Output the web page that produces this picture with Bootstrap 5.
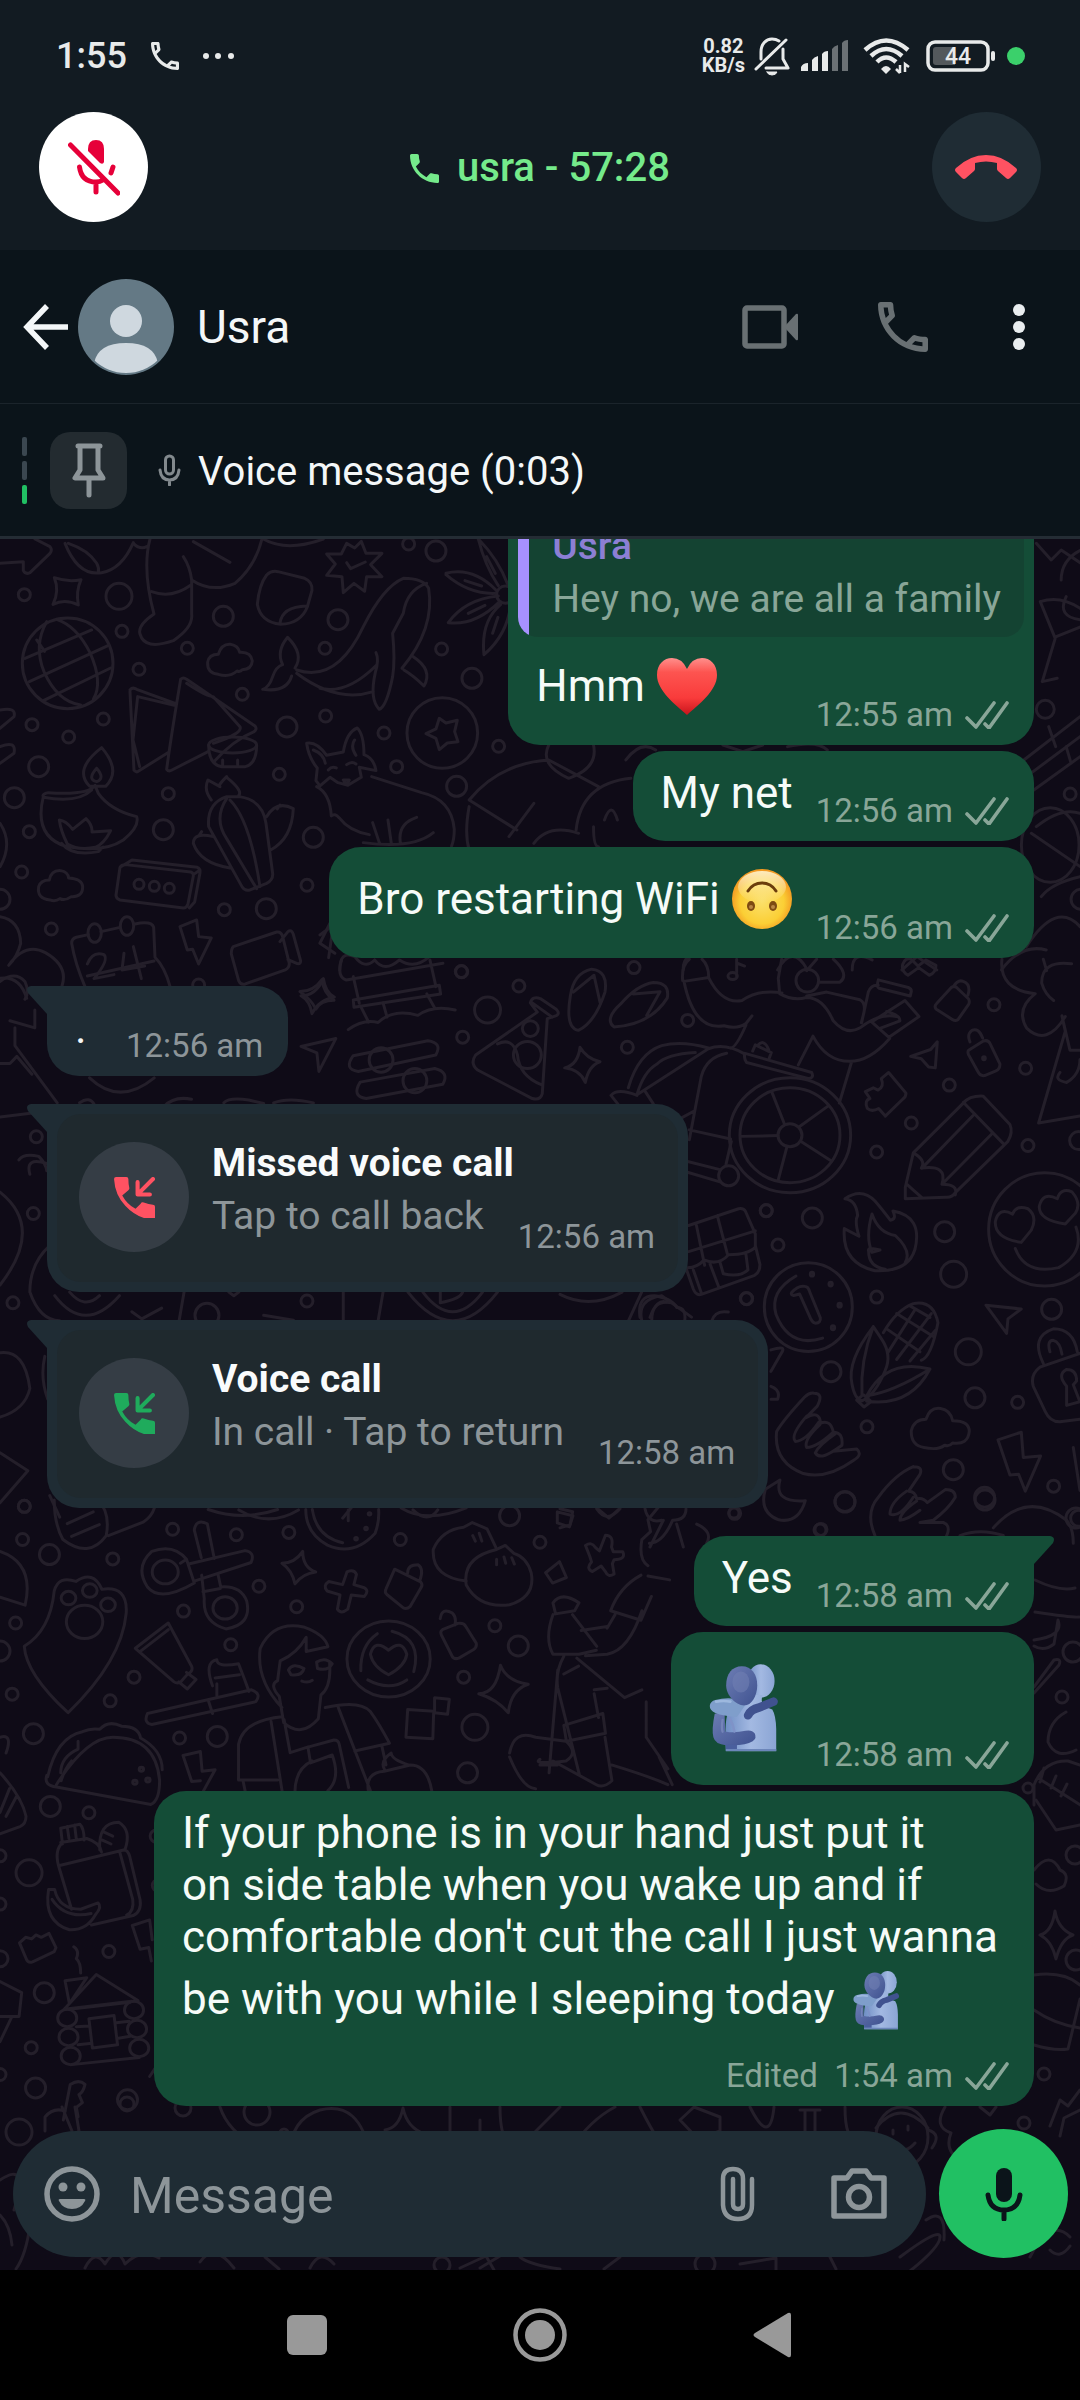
<!DOCTYPE html>
<html lang="en">
<head>
<meta charset="utf-8">
<meta name="viewport" content="width=device-width, initial-scale=1">
<title>Usra</title>
<link href="https://cdn.jsdelivr.net/npm/bootstrap@5.3.0/dist/css/bootstrap.min.css" rel="stylesheet">
<style>
  body { font-family: Roboto, "Noto Sans", sans-serif; background: #000; color: #f4f7f8; }
  svg { display: block; flex: none; }
  .btn-plain { padding: 0; border: 0; background: none; color: inherit; line-height: 0; border-radius: 50%; flex: none; }

  .top-zone { background: #121b22; padding-bottom: 28px; }
  .status-row { height: 112px; padding: 0 55px 0 56px; color: #e8eaea; }
  .clock { font-size: 36px; font-weight: 500; line-height: 44px; }
  .speed { font-size: 20px; font-weight: 700; line-height: 19px; }
  .call-row { padding: 0 39px; }
  .call-btn { width: 109px; height: 110px; display: flex; align-items: center; justify-content: center; }
  .call-btn-mute { background: #fff; color: #e60039; }
  .call-btn-end { background: #1f2c34; color: #ff5262; }
  .call-title { color: #75ea8b; font-size: 40px; font-weight: 500; line-height: 46px; gap: 18px; padding-top: 2px; }

  .chat-head { height: 154px; background: #0b141a; border-bottom: 1px solid #1b242b; padding: 0 55px 0 23px; }
  .avatar { margin-left: 10px; }
  .chat-name { font-size: 46px; line-height: 54px; margin-left: 23px; }
  .head-call { margin: 0 85px 0 79px; }
  .ink-dim { color: #697073; }
  .pinned-row { height: 135px; background: #0b141a; border-bottom: 3px solid #242c34; padding: 0 22px; }
  .pin-ticks { gap: 5px; width: 5px; margin-right: 23px; }
  .pin-ticks i { height: 19px; border-radius: 2px; background: #3b4750; }
  .pin-ticks i:last-child { background: #21c063; }
  .pin-tile { width: 77px; height: 77px; border-radius: 20px; background: #232b30; margin-right: 31px; }
  .pin-label { font-size: 40px; line-height: 46px; margin-left: 17px; padding-top: 3px; }

  .chat-zone { background: #0f0b17; min-height: 0; isolation: isolate; }
  .wallpaper { position: absolute; inset: 0; width: 100%; height: 100%; z-index: -1; fill: none; stroke: #241f2a; stroke-linecap: round; stroke-linejoin: round; }
  .wallpaper * { vector-effect: non-scaling-stroke; stroke-width: 3px; }
  .thread { min-height: 0; padding: 0 46px 0 47px; gap: 28px; }
  .burst { gap: 6px; }

  .bubble { position: relative; border-radius: 32px; padding-bottom: 10px; max-width: 90%; }
  .bubble-out { background: #144d37; align-self: flex-end; color: #f6fbf8; }
  .bubble-in { background: #1f2c34; align-self: flex-start; }
  .bubble-line { padding: 16px 25px 0 28px; gap: 23px; }
  .bubble-text { font-size: 44px; line-height: 52px; margin-bottom: 12px; }
  .bubble-dot { width: 28px; }
  .bubble-long { margin: 0 11px 20px 0; }
  .stamp { font-size: 33px; line-height: 40px; color: #89a698; gap: 12px; white-space: nowrap; }
  .bubble-in .stamp { color: #8d9599; }
  .tail { position: absolute; top: 0; }
  .tail-l { right: 100%; fill: #1f2c34; }
  .tail-r { left: 100%; fill: #144d37; }
  .has-tail-l { border-top-left-radius: 0; }
  .has-tail-r { border-top-right-radius: 0; }
  .emoji { display: inline-block; width: 62px; height: 73px; vertical-align: -22px; }
  .emoji-solo { display: block; width: 94px; height: 115px; }

  .quote { margin: 10px 10px 0; border-radius: 20px; background: linear-gradient(to right, #a791ff 11px, #144332 11px); padding: 10px 23px 11px 34px; font-size: 39px; line-height: 53px; color: #89a698; }
  .quote-name { color: #8c7fd4; font-weight: 500; }
  .quote + .bubble-line { padding-top: 13px; }

  .call-tile { margin: 10px 10px 0; border-radius: 24px; background: #1f292e; padding: 23px 23px 23px 22px; }
  .call-mark { width: 110px; height: 110px; border-radius: 50%; background: #353d45; margin: 5px 23px 7px 0; flex: none; }
  .call-missed { color: #ff5262; }
  .call-live { color: #1fab5c; }
  .call-copy { font-size: 39px; line-height: 53px; color: #8d9599; }
  .call-copy strong { display: block; color: #f9fbfc; font-weight: 700; }
  .call-sub { gap: 34px; }
  .call-sub .stamp { margin-top: 27px; }

  .composer { padding: 23px 12px 12px 13px; gap: 13px; }
  .pill { height: 126px; min-width: 0; border-radius: 63px; background: #1f2c34; padding: 0 39px 0 31px; color: #8d9599; }
  .pill input { width: 0; background: none; border: 0; outline: 0; color: #f4f7f8; font-size: 50px; line-height: 58px; min-width: 0; margin: 4px 34px 0 30px; padding: 0; }
  .pill input::placeholder { color: #8d9599; opacity: 1; }
  .pill-camera { margin-left: 76px; }
  .send-btn { width: 129px; height: 129px; display: flex; align-items: center; justify-content: center; background: #21c063; color: #0b141a; }

  .sys-nav { height: 130px; background: #000; color: #999; gap: 179px; }
</style>
</head>
<body>
<svg width="0" height="0" class="position-absolute" aria-hidden="true">
  <defs>
    <linearGradient id="gDark" x1="0" y1="0" x2="1" y2="1"><stop offset="0" stop-color="#6d7db4"/><stop offset="1" stop-color="#3f5290"/></linearGradient>
    <linearGradient id="gLight" x1="0" y1="0" x2="1" y2="0"><stop offset="0" stop-color="#6f8ec4"/><stop offset=".5" stop-color="#a3b9e2"/><stop offset="1" stop-color="#8ba5d4"/></linearGradient>
    <linearGradient id="gHeart" x1="0" y1="0" x2="0" y2="1"><stop offset="0" stop-color="#ff8f8c"/><stop offset=".25" stop-color="#fd5450"/><stop offset=".7" stop-color="#f93b3b"/><stop offset="1" stop-color="#c9141c"/></linearGradient>
    <radialGradient id="gFace" cx=".5" cy=".55" r=".52"><stop offset="0" stop-color="#fbe06a"/><stop offset=".7" stop-color="#fbcf35"/><stop offset="1" stop-color="#f39a22"/></radialGradient>
    <linearGradient id="gShine" x1="0" y1="0" x2="0" y2="1"><stop offset="0" stop-color="#fff4cf" stop-opacity=".9"/><stop offset="1" stop-color="#fff4cf" stop-opacity="0"/></linearGradient>
    <symbol id="hug" viewBox="205 490 210 272">
      <ellipse cx="363" cy="545" rx="42" ry="51" fill="url(#gLight)"/>
      <path d="M338 588l30 0q-6 24 4 34l26 10q11 18 12 60v68H256q-4-80 4-110l26-48q30 0 46 4 6-10 6-18z" fill="url(#gLight)"/>
      <path d="M222 645q-10 50-4 72 6 22 38 24l22 0q40 0 60-12 14-10 6-24-8-12-28-8-34 8-62 2l-2-60z" fill="url(#gDark)"/>
      <path d="M256 740h34v13h-34z" fill="#4a5f9e"/>
      <path d="M246 664q-4 24 0 36" stroke="#7484b8" stroke-width="7" fill="none" stroke-linecap="round"/>
      <path d="M266 655q12 22 16 44" stroke="#7f93c8" stroke-width="8" fill="none" stroke-linecap="round"/>
      <path d="M224 603q28-8 60-4l30 22-24 34q-42-2-66-12-18-8-17-22 1-14 17-18z" fill="#7f9ecb"/>
      <path d="M226 608q24-4 44 0" stroke="#9db8de" stroke-width="8" fill="none" stroke-linecap="round"/>
      <path d="M324 650q8-18 34-24l44-18" stroke="#40528f" stroke-width="26" fill="none" stroke-linecap="round" stroke-linejoin="round"/>
      <path d="M305 500c30 0 47 25 47 58s-18 62-40 62c-28-2-55-32-55-62 0-34 18-58 48-58z" fill="url(#gDark)"/>
      <ellipse cx="302" cy="548" rx="26" ry="32" fill="#6f7eb3" opacity=".6"/>
      <path d="M256 756h154" stroke="#6c86ba" stroke-width="6"/>
    </symbol>
    <symbol id="ticks" viewBox="0 0 44 28">
      <path d="M2 17l9 9L29 2M20 23l4 4L42 2" fill="none" stroke="currentColor" stroke-width="3.6" stroke-linecap="round" stroke-linejoin="round"/>
    </symbol>
    <symbol id="callIn" viewBox="0 0 41 40">
      <path d="M1 2q0-2 2-2h10q2 0 2 2 0 5 1 9 0 1-1 2l-6 5q5 9 13 13l5-5q1-2 3-1 5 2 9 2 2 0 2 2v11q0 2-2 2Q23 40 12 28 2 18 1 2z" fill="currentColor"/>
      <path d="M39 2L25 16M24 5v12h12" fill="none" stroke="currentColor" stroke-width="4" stroke-linecap="round" stroke-linejoin="round"/>
    </symbol>
    <symbol id="phoneLine" viewBox="3 3 18 18">
      <path fill="currentColor" d="M6.540 5c.06.89.21 1.760.45 2.590l-1.200 1.200c-.41-1.200-.67-2.470-.76-3.790h1.510m9.860 12.020c.85.24 1.720.39 2.600.45v1.490c-1.320-.09-2.590-.35-3.800-.75l1.200-1.190M7.500 3H4c-.55 0-1 .45-1 1 0 9.390 7.610 17 17 17 .55 0 1-.45 1-1v-3.490c0-.55-.45-1-1-1-1.240 0-2.450-.2-3.570-.57a.84.84 0 0 0-.31-.05c-.26 0-.51.1-.71.29l-2.200 2.200a15.149 15.149 0 0 1-6.590-6.590l2.200-2.200c.28-.28.36-.67.25-1.020A11.360 11.360 0 0 1 8.500 4c0-.55-.45-1-1-1z"/>
    </symbol>
    <symbol id="tailL" viewBox="0 0 20 28"><path d="M20 0H4Q-2 1 1 7L20 28z"/></symbol>
    <symbol id="tailR" viewBox="0 0 20 28"><path d="M0 0h16q6 1 3 7L0 28z"/></symbol>
  </defs>
</svg>

<div class="vh-100 d-flex flex-column overflow-hidden">
  <header class="top-zone flex-shrink-0">
    <div class="status-row d-flex align-items-center">
      <span class="clock">1:55</span>
      <svg class="ms-4" width="28" height="28" aria-hidden="true"><use href="#phoneLine"/></svg>
      <svg class="ms-4" width="31" height="8" viewBox="0 0 31 8" fill="currentColor" aria-hidden="true"><circle cx="3" cy="4" r="3"/><circle cx="15" cy="4" r="3"/><circle cx="28" cy="4" r="3"/></svg>
      <div class="ms-auto text-center"><div class="speed">0.82</div><div class="speed">KB/s</div></div>
      <svg class="ms-2" width="37" height="40" viewBox="0 0 37 40" fill="none" stroke="currentColor" stroke-width="3" stroke-linecap="round" stroke-linejoin="round" aria-hidden="true">
        <path d="M8 23V16C8 8 13 3 19 3q4 0 7 2M30 13v10l5 9H13M3 33L33 4"/><path d="M14 36h10q-1 3-5 3t-5-3z" fill="currentColor" stroke-width="1"/>
      </svg>
      <svg class="ms-2 me-2" width="53" height="32" viewBox="0 0 53 32" fill="currentColor" aria-hidden="true">
        <path d="M3 31v-4q2-4 7-4v8zM14 31V20q2-3 6-4v15zM24 31V14q2-3 6-3v20z"/><path opacity=".42" d="M34 31V9q2-3 6-4v26zM44 31V3q2-3 6-3v31z"/>
      </svg>
      <svg class="ms-1 me-3" width="47" height="36" viewBox="0 0 47 36" fill="none" stroke="currentColor" stroke-width="4.500" aria-hidden="true">
        <path d="M2 12Q23-7 45 12M8 18Q23 4 39 18M14 24Q23 15 33 24"/><path d="M18 31q5-6 10 0l-5 5z" fill="currentColor" stroke="none"/><path d="M37 27v8m-4-4l4 4m5-1v-8l4 3" stroke-width="2.500"/>
      </svg>
      <svg class="me-1" width="69" height="32" viewBox="0 0 69 32" role="img" aria-label="Battery 44 percent">
        <rect x="2" y="2" width="60" height="28" rx="7" fill="none" stroke="currentColor" stroke-width="3.500"/><path d="M10 7h19v18H10q-3 0-3-3V10q0-3 3-3z" fill="#53585c"/><rect x="65" y="11" width="4" height="10" rx="2" fill="currentColor"/>
        <text x="32" y="24" text-anchor="middle" font-size="23" font-weight="500" fill="currentColor">44</text>
      </svg>
      <svg class="ms-2" width="18" height="18" viewBox="0 0 18 18" aria-hidden="true"><circle cx="9" cy="9" r="9" fill="#3bd06b"/></svg>
    </div>
    <div class="call-row d-flex align-items-center justify-content-between">
      <button type="button" class="btn-plain call-btn call-btn-mute" aria-label="Unmute">
        <svg width="52" height="58" viewBox="0 0 52 58" fill="none" stroke="currentColor" stroke-linecap="round" stroke-linejoin="round" aria-hidden="true">
          <path d="M20 11q0-9 8-9t8 9v13q-1 3-4 1L20 13z" fill="currentColor" stroke="none"/><path d="M11.500 29q2 15 16.500 15 4 0 7-2M45 29l-2 6M28 45v9M2.500 7L50 55" stroke-width="5"/>
        </svg>
      </button>
      <div class="call-title d-flex align-items-center">
        <svg width="29" height="29" viewBox="3 3 18 18" fill="currentColor" aria-hidden="true"><path d="M6.620 10.790c1.440 2.830 3.760 5.140 6.590 6.590l2.200-2.200c.27-.27.67-.36 1.020-.24 1.120.37 2.330.57 3.570.57.55 0 1 .45 1 1V20c0 .55-.45 1-1 1-9.390 0-17-7.610-17-17 0-.55.45-1 1-1h3.500c.55 0 1 .45 1 1 0 1.250.2 2.450.57 3.570.11.35.03.74-.25 1.020z"/></svg>
        <span>usra - 57:28</span>
      </div>
      <button type="button" class="btn-plain call-btn call-btn-end" aria-label="End call">
        <svg width="62" height="24" viewBox="0 0 62 24" fill="currentColor" aria-hidden="true"><path d="M1 13Q15 0 31 0T61 13q2 2 0 4l-6 6q-2 2-4 0l-8-7q-1-1-1-2V8Q31 5 20 8v6q0 1-1 2l-8 7q-2 2-4 0l-6-6q-2-2 0-4z"/></svg>
      </button>
    </div>
  </header>

  <div class="chat-head d-flex align-items-center flex-shrink-0">
    <button type="button" class="btn-plain" aria-label="Back">
      <svg width="45" height="46" viewBox="0 0 45 46" fill="none" stroke="currentColor" stroke-width="5.500"><path d="M24 2L4 23l20 21M4 23h41"/></svg>
    </button>
    <svg class="avatar" width="96" height="96" viewBox="0 0 96 96" role="img" aria-label="Profile photo">
      <defs><clipPath id="avClip"><circle cx="48" cy="48" r="46"/></clipPath></defs>
      <circle cx="48" cy="48" r="48" fill="#647985"/><g clip-path="url(#avClip)" fill="#cfd8df"><circle cx="48" cy="42" r="16"/><path d="M16 84q4-20 32-20t32 20v12H16z"/></g>
    </svg>
    <h1 class="chat-name fw-normal mb-0 me-auto">Usra</h1>
    <button type="button" class="btn-plain ink-dim" aria-label="Video call">
      <svg width="57" height="46" viewBox="0 0 57 46" fill="none" stroke="currentColor" stroke-width="5.500"><rect x="3" y="4" width="39" height="38" rx="2"/><path d="M43 22L54 10q2-1 2 1v24q0 2-2 1L43 24z" fill="currentColor" stroke="none"/></svg>
    </button>
    <button type="button" class="btn-plain ink-dim head-call" aria-label="Voice call">
      <svg width="50" height="50"><use href="#phoneLine"/></svg>
    </button>
    <button type="button" class="btn-plain" aria-label="More options">
      <svg width="12" height="46" viewBox="0 0 12 46" fill="#e9edef"><circle cx="6" cy="6" r="6"/><circle cx="6" cy="23" r="6"/><circle cx="6" cy="40" r="6"/></svg>
    </button>
  </div>

  <div class="pinned-row d-flex align-items-center flex-shrink-0">
    <div class="pin-ticks d-flex flex-column"><i></i><i></i><i></i></div>
    <div class="pin-tile d-flex align-items-center justify-content-center">
      <svg width="34" height="56" viewBox="0 0 34 56" fill="none" stroke="#8d9599" stroke-width="5" stroke-linecap="round" stroke-linejoin="round" aria-hidden="true"><path d="M6 4h22M8 4v24l-5 8h28l-5-8V4M17 37v16"/></svg>
    </div>
    <svg width="23" height="32" viewBox="0 0 23 32" fill="none" stroke="#82898d" stroke-width="3" stroke-linecap="round" aria-hidden="true"><rect x="7.500" y="2" width="8" height="18" rx="4"/><path d="M2 16q1 10 9.500 10T21 16M11.500 26v5"/></svg>
    <span class="pin-label">Voice message (0:03)</span>
  </div>

  <main class="chat-zone position-relative flex-grow-1 d-flex flex-column">
    <svg class="wallpaper" viewBox="0 539 1080 1731" preserveAspectRatio="xMidYMax slice" aria-hidden="true">
      <!-- upper left: globe, whale, fox, cactus, calendar -->
      <g transform="translate(0 530) scale(.3333)" data-sx="3" data-sy="3" data-dots="73,194,6 357,199,13 366,304,6 417,418,6 562,355,6 670,259,10 727,493,6 861,591,10 977,558,6 1014,269,10 975,355,6 1325,357,6 1416,445,10 1226,42,6 1308,63,10 1152,609,6 1496,649,6 1190,710,6 1370,769,10 838,733,6 310,567,6 96,584,6 206,621,6 116,710,10 43,803,10 505,791,6 490,899,10 88,905,6 65,1026,6 940,922,10 921,1066,6 673,1139,6 799,1136,10 154,1197,6 1384,1325,6 417,1063,5 463,1069,5 508,1075,5 0,1108,10 596,1365,6">
        <path d="M105 27L150 50q8 10 0 20L90 128q-14 6-20-6V95L0 100"/>
        <path d="M195 40q40 100 110 88 60-10 95-90M205 40q60 20 85 60 8 14 5 28"/>
        <path d="M163 143q40 14 80 6-16 36-8 76-40-20-76-2 20-40 4-80z"/>
        <circle cx="203" cy="400" r="136"/><path d="M140 275q-40 70-8 150 40 90 110 100M170 268q60 20 100 100 40 90 10 140M75 385l200-85M88 455l236-108M130 512l202-98M110 330l24 34"/>
        <path d="M450 27q-24 90 12 225-50 34-42 60 14 50 100 20 60-40 55-80V150q-5-40-25-70M455 185q60 22 118-20M580 35l110 62M575 150q60 40 130 10 60-50 80-130M400 40q20 20 40 10M790 27q70 40 180 0"/>
        <path d="M800 135q14-14 34-10l80 20q24 10 22 36l-14 50q-20 50-80 52-60-6-70-60 6-60 28-88zM840 280q6-50 80-52"/>
        <path d="M655 433q-34-4-32-36 4-24 32-24 10-32 36-30 24 4 28 24 34-2 38 26-2 26-30 26-6 8-16 4-22 20-56 10z"/>
        <path d="M1040 40l24 14 20-20 14 36h48l-34 34 34 36h-46l-6 44-32-24-32 28-4-48-46-4 26-34-26-30h44zM1040 98l12 18 44-20"/>
        <path d="M890 420q120 40 200-130 60-120 120-145 60 0 76 30 20 120-80 240M890 430q120 90 230 55M960 475q80 20 170-70M788 478q20-6 30-38 10-30 30-36-20-40 15-82 50 50 22 92M790 478q70 10 85-40M1280 160q-60 20-70 90l-32 60q8 80 0 130-18 90-40 98-30-30-12-110 12-40 2-60M1240 380q60 40 32 88-30-30-60-48"/>
        <path d="M1435 27q20 80 60 140M1435 27q60 60 90 140M1460 80l26 50M1338 130q80-20 150 50M1338 134q70 60 150 56M1395 152l50 16M1345 278q50-70 150-80M1345 278q80 10 155-64M1405 250l50-24M1452 374q-10-100 50-150M1452 374q70-60 80-150M1478 310l16-48"/><circle cx="1516" cy="194" r="26"/>
        <path d="M390 480q8-10 20-2l120 44M413 500l110 26M390 485l12 236q8 8 14 2l90-56M413 500l-14 130 20 80M542 448q-30 180-42 270 6 8 16 2l110-56M542 448q8-8 18 0l205 140q8 10-4 18-60 24-120 90M560 460q60 40 80 40l80 90q10 20-80 50"/>
        <ellipse cx="698" cy="645" rx="72" ry="24"/><path d="M626 645q0 60 40 65h70q34-8 34-65M668 690v14M713 690v14"/>
        <path d="M920 640q30-6 60 36l50-10q10-60 42-72 20 20 20 80 30 10 36 48l-50-10 6 30-40 24-30-8-24-16-30 26-12-16 4-38q-26-30-32-74zM940 660q30 10 36 40M1064 630q-14 20 4 46M985 720q10-12 24-6M1040 704q16-12 28-2M1030 750h18l-8 14zM950 770q40 20 44 88 10-10 24 6 30 40 90 50M1115 740l150 48q90 20 98 110 0 30-8 50M1118 878l20 60M1164 870l10 70M1250 862q-60 20-48 80M1300 908q-60 50-210 30"/>
        <circle cx="1327" cy="609" r="106"/><path d="M1318 565l20 14 34-8-8 34 10 30-32 4-24 20-10-34-30-14 30-14z"/>
        <path d="M305 653q60 70 12 116h-48q-50-50 36-116zM290 715q26 30 0 40-30-6 0-40M130 800q-30 120 70 150 110 20 170-20 50-40 40-70-80-20-115-70l-10-24q-20 30-140 22-20 4-15 12zM275 780q-40 40-145 22M178 870q20 2 40 28l40-32q20 20 18 40l56-4q-20 40-46 50-50 10-84-10-20-40-24-72zM185 940q30 40 110 25l14-14"/>
        <path d="M680 740q-30 30-20 30l-36-20q-14 30 10 60M680 742q50 40 36 55M680 800q-60 20-54 90l100 180q8 14 24 10l50-20q20-10 18-30l-20-150q-10-70-80-80zM680 806q-40 60 0 120l90 150M690 810q60 60 90 260M800 860q30-50 80-24-4 90-68 124M640 920q-60-14-60 20 20 60 110 74M605 905l-8 12M840 825l-8 12"/>
        <path d="M360 1012q4-8 16-8l196 22q10 4 8 12l-16 84q-4 12-14 12l-190-24q-12-4-12-14zM360 1012l36-22 196 22q10 4 8 16l-16 88-16 18M580 1034l20-14"/>
        <path d="M150 1110q-40-4-34-40 6-20 32-20 6-30 34-28 22 4 24 22 40 2 42 26 0 32-34 30-20 14-34 6-14 10-30 4z"/>
        <path d="M215 1240q0-14 14-18l36-8M303 1205l54-12M405 1182q50-10 56 10l4 90q30 30 46 90M215 1240q10 60 40 130M262 1338l200-45"/><ellipse cx="284" cy="1209" rx="20" ry="28"/><ellipse cx="381" cy="1188" rx="20" ry="28"/>
        <path d="M262 1302q16-40 50-28 16 16-30 72l60-12M372 1270l-6 50 68-12M400 1250l24 96"/>
        <path d="M540 1190l50-20 6 50 38 4-38 78-18-44-16 2z"/>
        <path d="M700 1250l130-44q14-2 18 14l20 80q0 14-12 20l-120 42q-14 4-20-10l-22-80q0-16 6-22zM840 1235l24-30q10-8 16 8l22 80q0 10-10 8l-28-12"/>
        <path d="M0 1160q60 10 62 80-10 40-36 66 50-70 110-38 70 40 50 100M0 1345q60-8 80 60M0 880q40 60 0 130M0 540q50-10 42 20L0 595M0 650q50-20 42 20L0 700M960 1215l40-30-14 98M900 1385q40 0 66-36 4 40 36 62-40 0-54 26-16-30-48-52z"/>
        <path d="M1025 1290q-16 50 14 60l290-50M1060 1340l18 80M1290 1290l18 80M1060 1410l258-44 4 26-260 40z"/>
      </g>
      <!-- upper right edge and the strips between the first bubbles -->
      <g transform="translate(300 530) scale(.4975 .3333)" data-sx="2.01" data-sy="3" data-dots="1498,538,9 1548,792,6 1570,1108,10">
        <path d="M1480 40l30 50 20-30 40 40M1530 150q0-60 40-90M1488 215q40-20 80 20M1488 215l30 110-26 130 30-10M1520 320l50-30M1540 200q-20 60 30 70M1455 690L1568 560M1460 740L1568 620M1475 780l93-100M1505 590l14 60M1540 650l10 50"/>
        <ellipse cx="1508" cy="945" rx="58" ry="112"/><path d="M1480 890q50-60 88-40M1470 910l98 100M1490 1100q20-40 78-60"/>
        <path d="M340 810q60-110 160-120l100 80M340 810l96 90M470 820l-50 100M340 830q-10 80 0 130M470 940q30-60 90-30M555 900q10-140 110-155M590 890q0 60 10 60M612 870q14-60 26 0M500 645q-20 60 40 100 60-30 50-100M655 690q30-60 60-30M850 645l40 20 40-20M980 650q60-20 80 10"/>
        <path d="M60 1180l-20 60 30 30M80 1320q0-60 30-40 20 40 40 10 20 40 50 0 30 30 60-10M770 1320q0-60 50-40M960 1320q30-80 60 0M1110 1320q0-60 40-30M1210 1320l30-40 40 40M1410 1320q40-80 90-60M1460 1250q60-140 108-60"/>
      </g>
      <!-- middle left band -->
      <g transform="translate(0 960) scale(.4975 .3571)" data-sx="2.01" data-sy="2.8" data-dots="928,33,6 1043,73,6 930,216,6 980,140,13 617,955,6 26,960,6 67,710,6 73,495,6 1540,702,6 1500,948,6 49,1530,6 416,995,12">
        <path d="M605 100q30 0 45-48 4 40 22 52-30 6-45 46-4-36-22-50zM700 195q30-30 60-20 30-40 80-20 30-30 75-15M725 130l16 44M770 120l8 40M858 95l16 40"/>
        <path d="M605 242l70-22-34 92-4-52zM710 268l150-42q30 6 16 40L720 312q-30-6-10-44zM724 342l150-38q30 10 16 44L736 388q-30-6-12-46z"/><ellipse cx="766" cy="280" rx="24" ry="34"/><ellipse cx="834" cy="338" rx="24" ry="34"/>
        <path d="M1066 120q4-20 20-12l32 30q10 14-4 20l-14 6-10 210q-4 20-20 14l-110-80q-16-18-4-42l124-120zM1000 235q30-20 40 30 4 60 48 84M1070 120l40 40"/><ellipse cx="1066" cy="192" rx="16" ry="22"/><ellipse cx="1060" cy="266" rx="28" ry="38"/>
        <path d="M0 60q30-30 50 0 10 30 0 50M20 170l50 20v-50M30 190v50L115 400M0 290l20 0 14-20 30 50M0 440l90-16M38 560q10-20 40-10 14 20 16 40M60 600q-10-50 34-30M0 650q90 100 0 260M60 930q0-80 40-130M60 930q20 80 60 80M110 940q60 110 130 0M140 930q30 50 60 10M265 985l20 20 40-30M370 930l-10 80M460 930l10 10 10-10M690 930v80M770 930l-10 80M820 930q90 160 180 0M850 930q60 110 120 0M885 930v30q40-10 45-30M530 995l60 14M1290 1010q-10-60 40-70l60 60M1310 1010q0-60 40-50"/>
        <path d="M450 400q10-16 50-8l30 10M550 400q30-16 80 0M330 410q20-30 55-20M160 400q20-20 30 6M180 330q60 80 130 0M0 1100q50-10 60 100-10 60-60 80M90 1110q-10 60 6 120M0 1380l56 50-56 90M100 1500l20 60M480 1540q60 50 120 0M700 1540v30M830 1540q30 40 50 0"/>
      </g>
      <!-- right side: wheelchair, pencil, fire, corn, lock -->
      <g transform="translate(560 950) scale(.3333 .3827)" data-sx="3" data-sy="2.613" data-dots="222,46,6 383,184,6 202,254,6 1302,143,6 1397,309,6 1168,353,6 1054,452,6 1404,511,6 950,528,6 1154,736,10 1181,847,13 757,700,10 619,681,6 654,771,6 560,911,6 950,907,6 1475,939,10 1225,1050,13 813,1102,10 1245,1170,10 1373,1182,6 921,1246,6 1180,1358,10 1274,1430,10 855,1441,10 783,1514,6 1481,1401,6 524,1472,6 1556,1485,8 1556,498,9">
        <ellipse cx="690" cy="484" rx="182" ry="150"/><ellipse cx="690" cy="484" rx="150" ry="124"/><ellipse cx="690" cy="484" rx="36" ry="30"/>
        <path d="M636 372l38 84M804 408l-86 54M812 550l-90-50M655 600l26-86M542 487l112-2M555 270l200 50q8 14-8 16L560 294q-10-12-5-24zM578 264l8-16 48 20-6 14M592 250q20-20 34 10M715 300l44-75q40 66 110 66 60 0 120-60M875 292L838 400M555 272q-60-30-110-14l-214 120q20-60 60-80 30-26 115-30M205 360q30-90 100-110 60-14 140 6M153 380q20-20 78 0M153 380l22 24M256 370l24 32M500 270q-60 10-76 60l-36 166M388 470l124 24M362 440l42-20M380 552l100 22M380 580l100 26M498 560l16-60"/><ellipse cx="506" cy="590" rx="30" ry="26"/>
        <path d="M372 82l74-10q40 70 100 60 50-30 120-20M372 82q30 130 120 116 40 10 66-6l18-20M558 196q-30 60-46 60M368 80q-4-40 20-56M446 70q0-30-20-46M665 24l-10 50 4 40q40 20 80 10 50 0 80 60 40 40 80 20 60-40 110-30M740 120l60-10 100 20q20 10 10 40l-6 20M905 190l20-80q8-20 30-18M955 78l90 20q12 4 8 14l-2 8-94-20q-8-4-2-22zM935 188l100-56 42 42-90 54zM960 205l60-20q0-16-40-24M820 24q50 40 20 60h-60M770 24l-30 30"/><ellipse cx="742" cy="80" rx="34" ry="30"/>
        <path d="M530 24v44M530 34l24 8"/><ellipse cx="518" cy="68" rx="14" ry="9"/>
        <path d="M95 50q50 4 40 60-30 80-80 100-40-6-24-90 10-60 64-70zM40 110l62-44 18 70M280 85q50 0 42 40-50 70-160 76-30-20 20-60 50-50 98-56zM220 115l80-6-40 62M14 308q40-8 46-54 20 30 60 38-34 10-44 54-16-34-62-38z"/>
        <path d="M1028 38q8-20 26-14l20 18 24-16 30 14q0 20-20 26l-32-20-32 20q-20-10-16-28zM1130 140l44-42q8-6 16 0l36 30q4 8 0 14l-32 40q-8 4-16 0l-50-28q-6-8 2-14zM1180 96q14-20 30-14 24 8 14 36M1226 262l44-24q14-4 20 6l30 54q0 14-12 18l-34 12q-14 2-20-10l-28-44q-4-8 0-12zM1230 240q-10-20 6-30 20-8 32 20"/><circle cx="1272" cy="283" r="4"/>
        <path d="M1052 278l60-18 20-20-6 68-20-2-22-22zM986 320l52 54q0 10-10 16l-52 44-20-20q-20 10-34 0-10-20 8-26l-14-18 24-10 14 6q20-8 10-30z"/>
        <path d="M1060 530l150-130q20-20 60-18l80 74q10 20-6 44l-158 134q-10 14-30 12l-120 4V620zM1210 398l120 108M1240 432L1086 570M1296 480L1146 612M1060 530q40 20 24 40 80-10 62 42 50 0 40 28M1040 612l44 34"/>
        <path d="M855 650q50-30 90 6 20 20 46 50 20-2 8-24 90 14 66 100-20 60-120 56-100-20-92-110l44 20q-14-40-4-54-4-40-38-44zM936 690q-20 60 0 100l24-6q-40-10-34 4 0 40 50 46M936 690q20 50 70 56 50 40 30 70"/>
        <ellipse cx="1454" cy="730" rx="168" ry="148"/><path d="M1306 710q10-40 52-20 10-24 46-14 30 20 10 56l-30 32q-80-10-78-54zM1438 670q10-40 54-20 10-30 44-18 30 30 10 56l-30 28q-80-10-78-46zM1366 780q30 70 130 50 80-40 52-106"/>
        <ellipse cx="745" cy="933" rx="132" ry="116"/><path d="M708 852q-80 40-60 100 40 90 140 62M695 895q20-20 40-16 10 0 14 14l32 68q2 14-14 14-8 0-14-10l-34-66-18 4q-10-2-6-8z"/><circle cx="756" cy="847" r="5"/><circle cx="812" cy="873" r="5"/><circle cx="839" cy="928" r="5"/><circle cx="819" cy="987" r="5"/>
        <path d="M386 720l150-44q14-2 20 6l30 60v30l14 50q0 20-16 28l-160 50q-16 4-24-14l-20-50M386 788l200-54M408 714l26 110M472 694l30 100M586 776q-20 20-80 20-30 30-74 14-20 20-50 20M400 836l24 60M450 820l26 60M480 816l10 30q50 10 74-10l-6-40"/>
        <path d="M940 984q-80 90-64 150 8 40 30 44 40-16 70-80 20-40-10-80zM940 984q-40 90-34 180M920 1165q60-100 190-70-60 100-190 84zM920 1165q80-10 190-70M890 1176l20-14 24 18-22 14zM970 1000q40-60 90-76 60-10 74 50-20 90-50 98M980 990l100 60M1010 950l110 60M1050 930l60 30M985 1050l80-110M1010 1070l104-120M1050 1074l76-80"/>
        <path d="M1278 928l106 10-40 26-4 38zM1092 1300q-40-6-38-44 8-30 44-30 12-32 44-28 30 4 36 32 50 0 50 28-4 36-50 30-10 10-24 6-20 14-62 6zM1314 1280l70-20 6 66 52-4-46 92-20-44-26 2zM1540 1300l20 112"/>
        <path d="M1440 1090l120-36M1440 1090q-30 20-20 50l36 66q16 30 50 26l54-6M1450 1080q-40-70 30-90 60 0 72 60M1470 1050q-10-30 10-30 20 4 26 36M1520 1190v-50q-30-30 0-44 30 0 30 30l-10 10 20 44zM1436 452l80-240-10-40 24 90h30M1436 452l124-18M1500 320q-20 20 20 26 40-20 40-60M1326 24q-10 80 100 90-60 40-26 90 60 50 116-30M1450 24l10 30M1535 36q-90-10-90 50 10 30 36 46"/>
        <path d="M762 1158q30 0 10 34l-34 30q40-20 44 14 30-10 38 24 30 0 26 34l-26 16 70-6q20 14-10 30-80 50-150 34-90-30-80-110 20-30 84-90 14-12 28-10zM740 1218q-50 50-34 66 30 0 70-50M780 1240q-50 40-40 60 30 0 80-40M826 1264q-50 30-60 50 14 20 60-8M660 1385q-20 60 76 54-20 60-80 50-60-20-40-80z"/>
        <path d="M1060 1350q30 0 20 20l-34 44q20 0 24 20 20-4 32 10l54-34q30 0 30 20-20 30-66 60l-40 6 70 0q30 10 0 50M945 1530q-30-60 10-100 50-60 105-80M1040 1414q-50 30-50 60 30 10 70-44M1070 1440q-50 30-50 50 20 0 60-26M1300 1510q100-100 220-20 20 20 20 60M1200 1530q60-20 130 0"/>
        <path d="M0 900q90 40 186-6M205 970l40-76M240 960q-10-60 50-56 50 10 60 30 30 0 24 36M270 960q20-50 50-40M455 970q10-30 50-24M633 1045q50-14 30 10l-30 46M633 1140q30 10 20 34h-20M110 1460q30 40 70 0M255 1460q10 40 50 30M378 1460q0 30-40 30-30 60-70 60M410 1500q50 20 30 50M0 1510l30-8 8-34-38-8M310 1490l-40 70M350 1500l20 60"/>
      </g>
      <!-- lower left: paw, scissors, reader, taco, cabin -->
      <g transform="translate(0 1500) scale(.4337 .3954)" data-sx="2.306" data-sy="2.529" data-dots="56,16,6 52,100,6 114,138,10 260,149,6 398,74,6 545,88,6 666,82,6 923,100,6 1175,40,10 1245,107,6 36,311,6 0,382,10 423,281,6 597,218,6 684,270,6 532,366,6 309,448,6 254,508,6 28,491,6 77,591,10 414,602,6 501,598,10 116,775,10 205,791,6 1141,318,6 1195,369,10 1069,448,6 1095,575,13 1078,690,10 67,943,13 0,900,6 0,1022,6 251,1142,6 0,1160,8 102,1246,10 72,1385,6 82,1487,10 294,1517,10 0,1453,6 360,850,6 365,975,6">
        <path d="M125 0q0 60 20 100 60 50 100-10 10-60-20-90M155 60l60-30M165 92l64-30M250 90l80-34q20-14 26-36M480 24q80 30 160 0M705 24q0 60 50 90 60 30 110-30 10-30 8-60M720 24q10 70 70 84M790 46l30-40M925 20q60 40 150 0M1285 30l36 10-8 28-28-10zM1380 24l24 22 22-22"/><circle cx="852" cy="35" r="3"/><circle cx="844" cy="72" r="3"/><circle cx="821" cy="98" r="3"/>
        <path d="M0 130q80 30 58 136L0 246M125 230q10-40 50-24 40-30 60 20 60-10 56 60-10 120-134 252Q60 440 56 370q60-40 69-140z"/><circle cx="158" cy="248" r="17"/><circle cx="207" cy="229" r="17"/><circle cx="249" cy="265" r="17"/><circle cx="195" cy="308" r="42"/>
        <circle cx="381" cy="182" r="30"/><circle cx="519" cy="273" r="28"/><path d="M430 150q-30-40-80-20-40 40-10 90 30 40 108-10zM430 150l-14 10M435 162l130-34q24 4 14 30L448 205M464 146L448 76q4-30 30-16l16 88M465 190l6 60q-4 60 50 76 60-10 48-70-14-40-60-36l-6-30M468 232l40-8"/>
        <path d="M650 160q30 0 48-30 0 40 30 52-30 4-48 30-6-34-30-52zM800 182q16-8 22 6l-6 26 24 8q12 8 0 22l-30-4-8 36q-16 14-24 0l6-36-30-10q-10-14 4-24l32 8zM910 175l60 32q6 8 0 16l-24 46q-8 8-16 4l-38-34q-6-6-2-14zM940 184q0-20 24-20 14 10 4 40"/>
        <path d="M1075 205q-80-10-76-80 20-50 70-56l20-12 34 16 20 46M1145 125q-80 20-70 90 30 60 100 50 60-20 50-80-10-40-40-50l-20-20zM1090 90l6 14M1105 84l6 20M1145 150v14M1162 144l4 16M1180 146l6 16"/>
        <circle cx="896" cy="402" r="96"/><path d="M896 380q30-30 42 10-4 30-42 52-36-20-42-52 10-40 42-10zM870 338q-40 30-38 94M904 332q70 20 50 102M848 455q50 30 90 0"/>
        <path d="M1015 300q4-30 28-14 10 10 6 30M1020 328l36-16q14-2 18 8l24 42q2 10-6 16l-34 22q-12 4-16-6l-24-52q-4-10 2-14zM1258 184l32-28 16 40-32 14zM1350 115q14-10 22 4l10 10 14-40q20 0 14 30l4 12 22 0q8 20-20 20l-4 10 4 26q-14 10-20-6l-10-14-20 14q-16-8-2-24l-4-14z"/>
        <path d="M1104 490q40 0 50-72 14 40 64 48-40 14-46 72-26-34-68-48zM940 530l60 4-2 70-62-4zM1002 500l34 4-4 38-30-4z"/>
        <path d="M312 375l76-64 54 110q4 12-10 20l-16 20q-10 4-16-2zM322 384l66-56M430 436l22 18-20 24-20-18M490 470q-20-60 10-66 0 20 50 10l14 40 10 30M496 450l56-8M500 495v-30M340 540l240-60q24 10 10 30L350 568q-20-4-10-28zM480 506l10 34"/>
        <path d="M650 525q-60-70-50-150 30-70 100-54 50 20 56 50l-50 12v-36q-20 40-60 60l-6 50q-20 10 4 40l10 66q40 40 80-10l6-60q24-20 20-80M665 430q10-20 36-4-4 20-30 16zM730 410q20-14 36 4-10 20-34 12zM696 458q14 6 24-2M650 548q-90 10-100 70v90h90M625 560l26 180M750 525q80-20 104 10 20 30 44 80l-80 20M780 525l74 210M655 555l14 84 40-14M710 625l60-18q10 0 12 10l22 110M710 625l6 40 50-20q20 60-10 90M680 740q0-60 40-80M560 708l6 32M880 620l10 50M850 740q-10-50 36-54l60-16q40 0 50 68M886 680q-10-20 16-40 0 16 40 30"/>
        <path d="M110 700q20-100 80-114 20-10 40-6 20-24 50-8 40 0 44 30 50 30 50 80M130 720q70-120 130-120 100 0 108 110 0 50-20 60L130 726q-30-4-22-30M180 610v20q-40 20-40 60M165 660q-16 20-24 50"/><circle cx="326" cy="681" r="5"/><circle cx="311" cy="714" r="5"/><circle cx="341" cy="708" r="5"/>
        <path d="M422 646l40-10 4 50 30-4-30 60M422 646l20 66 20-2M0 690q50 60 60 110 0 20-14 26L0 844M0 790l22-60M14 800l24-50M0 600q30-10 14 40"/>
        <path d="M140 830l44-10q10 10 10 40M140 830l4 40M155 826l4 30M172 822l4 36M140 866l60-10q30 10 34 34M135 925l150-40q10 0 14 16l24 110q4 30-16 40l-96 24M135 925q-10-40 10-60M135 925l30 110M230 885q-4-70 44-70 30 20 14 70M240 840l20 10M236 860l20 10M276 890l30 120q4 30-14 40M112 985l14 0q10 50 60 50l40-16q10 10-6 30-20 40-60 38-60-20-48-102zM120 1010q30 50 90 36"/>
        <path d="M45 1120l14-14 14 4 10-10 12 6 18-10 16 36-4 10-50 26q-10 4-14-6zM170 1130q14 10 6 30 10 10 10 36M305 1076l40-14 6 50M305 1076l18 60 20-4 6 34M222 1200l96 66-170 22zM150 1216l50-8-40 66zM0 1218l50 28-6 60-44 0M0 1370l26-60"/>
        <circle cx="155" cy="1310" r="22"/><circle cx="158" cy="1358" r="22"/><circle cx="163" cy="1406" r="22"/><circle cx="309" cy="1290" r="22"/><circle cx="316" cy="1338" r="22"/><circle cx="321" cy="1386" r="22"/>
        <path d="M160 1288l140-18M205 1312l58-8 8 74-58 8zM176 1332l30-2M268 1322l30-4M180 1378l32-4M270 1362l30-6M165 1428l156-18M146 1568l16-90q20-14 34 0-4 20-14 26l8 20-14 12 4 24M345 1458l16-26"/>
        <path d="M1480 100l20-20-6-30 30-40M1480 100q-8 50 14 66M1478 190q-50 30-70 90l70 24 24-60M1494 192l50 10M1400 320l-60 10M1418 290l-18 34M1480 280q-30 100-80 110l-50 4M1275 260q20-30 60 0l-10 20-44 8zM1275 290q-20 60 0 100h60l40-10M1320 290l56 80M1300 395q-20 40-14 80l50 220M1300 440l34-20M1330 400l110 100 40-20M1370 480l30-4M1300 570l90-30 6 50-90 20zM1370 490l10 60M1395 600l16 110q-20 20-36 10l-100-60M1175 640q10-60 60-40l70 10q30 30 0 50-80 10-60-4M1175 650q30 80 60 80M1286 430l-20 260M1245 670h40M1490 510v90l50 80M1520 650l30 70M1410 670q90 30 130 50"/>
      </g>
      <!-- lower right edge and the strip around the composer -->
      <g data-sx="1" data-sy="1" data-dots="734,1513,5 820,1530,6 845,1502,10 985,1500,10 1062,1697,6 1073,1652,10 1076,1518,10 1028,1788,5 1075,1855,9 1076,1960,10 1044,2074,6 1024,2123,6 19,2132,13 127,2104,7 257,2112,13 183,2108,8 442,2265,8 705,2264,10 284,2133,4">
        <path d="M1035 1580q25 12 40 8M1035 1612q40 6 44 5M1034 1640q30-4 24-20l-4 24q-10 8-20 2M1034 1687l20-27q8-2 5 5l-25 28M1066 1712q-18 10-18 30 8 18 28 8M1034 1785q10-25 34-24l12 4M1034 1785v20M1038 1778l44 28M1044 1768l-4 14M1056 1776l-5 12M1067 1784l-6 12"/>
        <path d="M1036 1800l20 30 24-5M1034 1870q16-20 26 0 10 4 4 16-16 10-28-2M1040 1935q12-3 15-24 3 18 18 24-12 4-17 24-4-18-16-24M1034 1975q30-4 46 10M1034 2010q20 14 46 18M1034 2045q20 6 34 4l12-50M1050 2126l10-26 8 6 12-16M1060 2136l4-18 16-8"/>
        <path d="M62 2107l10 24M75 2107l4 24-18 14M45 2131v-14q8-10 20-6M220 2107q10 30 50 45M290 2160q-2-40 30-50 40-10 50 45M385 2130q14-2 18-22 4 20 22 26-16 6-20 26-8-22-20-30zM450 2107v35M480 2120v25M500 2107q0 30 10 40M525 2142l35-35M525 2142h44M570 2150q20-30 45-43M640 2107q20 40 32 50M680 2120l14-13 26 10v14l-22 8zM750 2107q20 40 24 0M800 2110h20M805 2110v30M815 2110v30M845 2107q0 34 12 30 0 20 30 25M945 2107q-12 20 6 26-8 20 14 30M980 2107l10 8 6-8"/>
        <ellipse cx="902" cy="2137" rx="26" ry="30"/><path d="M876 2128q24-30 52 0M893 2130v4M908 2126v4M895 2145q10 10 20-2M928 2130q14 4 4 18M0 2180q30-20 14 30M0 2215q10 10 12 30M30 2225q-4 30-14 44M85 2268q10-20 20-4 12-20 20 0 16-16 34-6M200 2262q14-20 34 6M265 2257l14 12M310 2268q10-20 24-4M460 2268l26-12 8 14M480 2268l20-12M520 2257q10 8 40 12M620 2257l-16 12M740 2264l36-6v12M830 2257l6 12M900 2257q40-30 40-20t-30 34M926 2220q20-14 18 20M1030 2257q20-40 40-20M1050 2250q10 10 20-4"/>
      </g>
    </svg>

    <div class="thread flex-grow-1 d-flex flex-column justify-content-end overflow-hidden">
      <div class="burst d-flex flex-column">
        <div class="bubble bubble-out">
          <div class="quote"><div class="quote-name">Usra</div>Hey no, we are all a family</div>
          <div class="bubble-line d-flex align-items-end">
            <div class="bubble-text">Hmm <svg class="emoji" viewBox="0 0 62 73" role="img" aria-label="red heart"><path d="M31 65C20 55 1 41 1 25 1 14 8 8 16 8q10 0 15 11Q36 8 46 8c8 0 15 6 15 17C61 41 42 55 31 65z" fill="url(#gHeart)"/></svg></div>
            <div class="stamp d-flex align-items-center ms-auto">12:55 am <svg width="44" height="28" role="img" aria-label="delivered"><use href="#ticks"/></svg></div>
          </div>
        </div>
        <div class="bubble bubble-out">
          <div class="bubble-line d-flex align-items-end">
            <div class="bubble-text">My net</div>
            <div class="stamp d-flex align-items-center ms-auto">12:56 am <svg width="44" height="28" role="img" aria-label="delivered"><use href="#ticks"/></svg></div>
          </div>
        </div>
        <div class="bubble bubble-out">
          <div class="bubble-line d-flex align-items-end">
            <div class="bubble-text">Bro restarting WiFi <svg class="emoji" viewBox="0 0 62 73" role="img" aria-label="upside-down face"><circle cx="31" cy="36" r="30" fill="url(#gFace)"/><ellipse cx="31" cy="24" rx="24" ry="16" fill="url(#gShine)"/><path d="M17 28q5-8 14-8t14 8" fill="none" stroke="#6b3d0c" stroke-width="3" stroke-linecap="round"/><ellipse cx="20" cy="43" rx="4" ry="5" fill="#7d4a12"/><ellipse cx="42" cy="43" rx="4" ry="5" fill="#7d4a12"/><ellipse cx="20" cy="44" rx="2" ry="2" fill="#b98645"/><ellipse cx="42" cy="44" rx="2" ry="2" fill="#b98645"/></svg></div>
            <div class="stamp d-flex align-items-center ms-auto">12:56 am <svg width="44" height="28" role="img" aria-label="delivered"><use href="#ticks"/></svg></div>
          </div>
        </div>
      </div>

      <div class="bubble bubble-in has-tail-l">
        <svg class="tail tail-l" width="20" height="28" aria-hidden="true"><use href="#tailL"/></svg>
        <div class="bubble-line d-flex align-items-end">
          <div class="bubble-text bubble-dot">.</div>
          <div class="stamp">12:56 am</div>
        </div>
      </div>

      <div class="bubble bubble-in has-tail-l">
        <svg class="tail tail-l" width="20" height="28" aria-hidden="true"><use href="#tailL"/></svg>
        <div class="call-tile d-flex align-items-start">
          <div class="call-mark call-missed d-flex align-items-center justify-content-center"><svg width="42" height="41" aria-hidden="true"><use href="#callIn"/></svg></div>
          <div class="call-copy">
            <strong>Missed voice call</strong>
            <div class="call-sub d-flex align-items-start"><span>Tap to call back</span><span class="stamp">12:56 am</span></div>
          </div>
        </div>
      </div>

      <div class="bubble bubble-in has-tail-l">
        <svg class="tail tail-l" width="20" height="28" aria-hidden="true"><use href="#tailL"/></svg>
        <div class="call-tile d-flex align-items-start">
          <div class="call-mark call-live d-flex align-items-center justify-content-center"><svg width="42" height="41" aria-hidden="true"><use href="#callIn"/></svg></div>
          <div class="call-copy">
            <strong>Voice call</strong>
            <div class="call-sub d-flex align-items-start"><span>In call · Tap to return</span><span class="stamp">12:58 am</span></div>
          </div>
        </div>
      </div>

      <div class="burst d-flex flex-column">
        <div class="bubble bubble-out has-tail-r">
          <svg class="tail tail-r" width="20" height="28" aria-hidden="true"><use href="#tailR"/></svg>
          <div class="bubble-line d-flex align-items-end">
            <div class="bubble-text">Yes</div>
            <div class="stamp d-flex align-items-center ms-auto">12:58 am <svg width="44" height="28" role="img" aria-label="delivered"><use href="#ticks"/></svg></div>
          </div>
        </div>
        <div class="bubble bubble-out">
          <div class="bubble-line d-flex align-items-end">
            <div class="bubble-text"><svg class="emoji-solo" viewBox="0 0 94 115" role="img" aria-label="people hugging"><use href="#hug" x="10" y="15" width="69" height="89"/></svg></div>
            <div class="stamp d-flex align-items-center ms-auto">12:58 am <svg width="44" height="28" role="img" aria-label="delivered"><use href="#ticks"/></svg></div>
          </div>
        </div>
        <div class="bubble bubble-out">
          <div class="bubble-line">
            <div class="bubble-text bubble-long">If your phone is in your hand just put it<br>on side table when you wake up and if<br>comfortable don't cut the call I just wanna<br>be with you while I sleeping today <svg class="emoji" viewBox="0 0 62 73" role="img" aria-label="people hugging"><use href="#hug" x="8" y="7" width="46" height="60"/></svg></div>
            <div class="stamp d-flex align-items-center justify-content-end"><span>Edited&nbsp; 1:54 am</span> <svg width="44" height="28" role="img" aria-label="delivered"><use href="#ticks"/></svg></div>
          </div>
        </div>
      </div>
    </div>

    <form class="composer d-flex align-items-center flex-shrink-0" onsubmit="return false">
      <div class="pill d-flex align-items-center flex-grow-1">
        <button type="button" class="btn-plain" aria-label="Emoji">
          <svg width="56" height="56" viewBox="0 0 56 56" fill="currentColor"><circle cx="28" cy="28" r="25" fill="none" stroke="currentColor" stroke-width="5.500"/><circle cx="19" cy="21" r="4.500"/><circle cx="37" cy="21" r="4.500"/><path d="M16 33h24q2 0 1 2-4 8-13 8t-13-8q-1-2 1-2z"/></svg>
        </button>
        <input type="text" class="flex-grow-1" placeholder="Message" aria-label="Message">
        <button type="button" class="btn-plain" aria-label="Attach">
          <svg width="35" height="56" viewBox="0 0 35 56" fill="none" stroke="currentColor" stroke-width="4.500" stroke-linecap="round"><path d="M32 13v26q0 14-14 14T3 39V13Q3 3 13 3t10 10v25q0 5-5 5t-5-5V13"/></svg>
        </button>
        <button type="button" class="btn-plain pill-camera" aria-label="Camera">
          <svg width="56" height="56" viewBox="0 0 56 56" fill="none" stroke="currentColor" stroke-width="5.500" stroke-linejoin="round"><path d="M3 12h13l5-7h14l5 7h13v38H3z"/><circle cx="28" cy="31" r="10.500"/></svg>
        </button>
      </div>
      <button type="button" class="btn-plain send-btn" aria-label="Record voice message">
        <svg width="38" height="54" viewBox="0 0 38 54" fill="none" stroke="currentColor" stroke-width="5" stroke-linecap="round"><rect x="11" y="1" width="16" height="34" rx="8" fill="currentColor" stroke="none"/><path d="M3 28q2 15 16 15t16-15M19 43v9"/></svg>
      </button>
    </form>
  </main>

  <nav class="sys-nav d-flex align-items-center justify-content-center flex-shrink-0" aria-label="System">
    <button type="button" class="btn-plain" aria-label="Recent apps"><svg width="54" height="54" viewBox="0 0 54 54" fill="currentColor"><rect x="7" y="7" width="40" height="40" rx="6"/></svg></button>
    <button type="button" class="btn-plain" aria-label="Home"><svg width="54" height="54" viewBox="0 0 54 54" fill="currentColor"><circle cx="27" cy="27" r="24.500" fill="none" stroke="currentColor" stroke-width="4.500"/><circle cx="27" cy="27" r="15"/></svg></button>
    <button type="button" class="btn-plain" aria-label="Back"><svg width="54" height="54" viewBox="0 0 54 54" fill="currentColor"><path d="M9 25L42 5q3-1 3 2v40q0 3-3 2L9 29q-3-2 0-4z"/></svg></button>
  </nav>
</div>

<script>
  // Scatter the small wallpaper rings listed as "x,y,radius" on each doodle group.
  document.querySelectorAll('.wallpaper g[data-dots]').forEach(function (g) {
    g.dataset.dots.split(' ').forEach(function (d) {
      var v = d.split(',').map(Number);
      var e = document.createElementNS('http://www.w3.org/2000/svg', 'ellipse');
      e.setAttribute('cx', v[0]);
      e.setAttribute('cy', v[1]);
      e.setAttribute('rx', v[2] * g.dataset.sx);
      e.setAttribute('ry', v[2] * g.dataset.sy);
      g.appendChild(e);
    });
  });
</script>
<script src="https://cdn.jsdelivr.net/npm/bootstrap@5.3.0/dist/js/bootstrap.bundle.min.js"></script>
</body>
</html>
